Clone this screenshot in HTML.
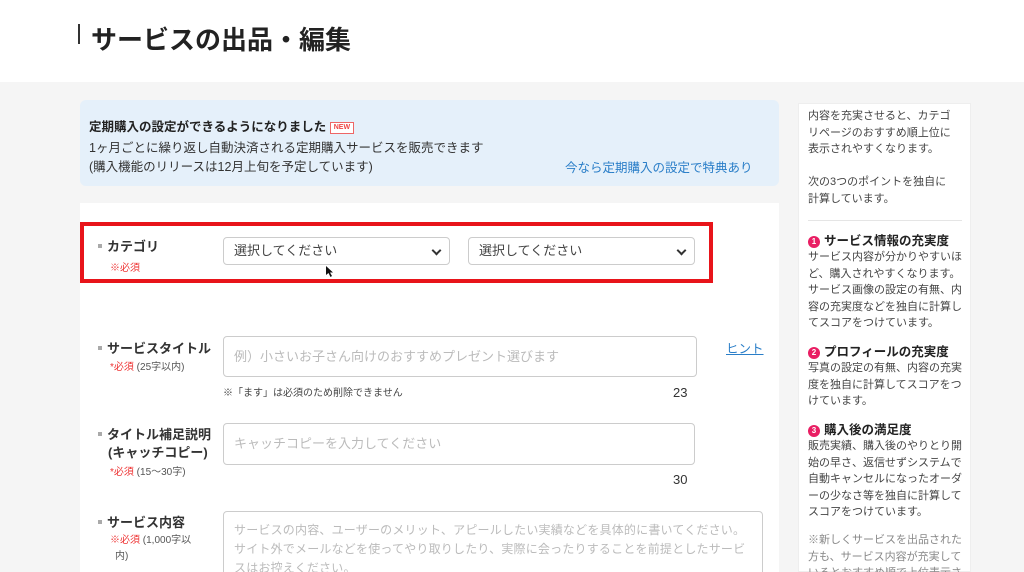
<!DOCTYPE html>
<html style="overflow:hidden;height:572px"><head><meta charset="utf-8">
<style>
*{margin:0;padding:0;box-sizing:border-box}
body{width:1024px;height:572px;overflow:hidden;background:#f5f5f5;font-family:"Liberation Sans","Noto Sans CJK JP",sans-serif;color:#333;position:relative}
.a{position:absolute;white-space:nowrap}
.hdr{position:absolute;left:0;top:0;width:1024px;height:82px;background:#fff}
.lbl{font-size:13px;font-weight:bold;color:#333}
.lbl i{display:inline-block;width:4px;height:4px;background:#aaa;margin-right:5px;vertical-align:middle;position:relative;top:-2px}
.req{font-size:10px;color:#e33}
.req span{color:#555}
.inp{position:absolute;background:#fff;border:1px solid #ccc;border-radius:4px;font-size:13px;color:#bbb;padding-left:10px;overflow:hidden}
.sel{position:absolute;background:#fff;border:1px solid #ccc;border-radius:4px;font-size:13px;color:#444;padding-left:10px;line-height:26px}
.sel:after{content:"";position:absolute;right:9px;top:9px;width:5px;height:5px;border-right:2px solid #333;border-bottom:2px solid #333;transform:rotate(45deg)}
.side{font-size:11px;line-height:16.5px;color:#444}
.sh{font-size:12.5px;font-weight:bold;color:#222}
.num{display:inline-block;width:12px;height:12px;border-radius:50%;background:#e91e63;color:#fff;font-size:8px;text-align:center;line-height:12px;margin-right:4px;vertical-align:1px}
</style></head><body>
<div class="hdr"></div>
<div class="a" style="left:78px;top:24px;width:2px;height:20px;background:#333"></div>
<div class="a" style="left:91px;top:20px;font-size:26px;font-weight:bold;color:#222">サービスの出品・編集</div>

<div class="a" style="left:80px;top:100px;width:699px;height:86px;background:#e5f0fa;border-radius:6px"></div>
<div class="a" style="left:89px;top:116px;font-size:12.5px;font-weight:bold;color:#222">定期購入の設定ができるようになりました <span style="display:inline-block;border:1px solid #e66;color:#e44;font-size:7px;padding:0 3px;line-height:10px;vertical-align:2px;background:#fff">NEW</span></div>
<div class="a" style="left:89px;top:137px;font-size:12.5px;color:#333">1ヶ月ごとに繰り返し自動決済される定期購入サービスを販売できます</div>
<div class="a" style="left:89px;top:156px;font-size:12.5px;color:#333">(購入機能のリリースは12月上旬を予定しています)</div>
<div class="a" style="left:565px;top:157px;font-size:12.5px;color:#2a7ec8">今なら定期購入の設定で特典あり</div>

<div class="a" style="left:80px;top:203px;width:699px;height:369px;background:#fff"></div>
<div class="a" style="left:80px;top:222px;width:633px;height:61px;border:4px solid #e8141a"></div>
<div class="a lbl" style="left:98px;top:236px"><i></i>カテゴリ</div>
<div class="a req" style="left:110px;top:259px">※必須</div>
<div class="sel" style="left:223px;top:237px;width:227px;height:28px">選択してください</div>
<div class="sel" style="left:468px;top:237px;width:227px;height:28px">選択してください</div>
<svg class="a" style="left:326px;top:266px" width="8" height="11" viewBox="0 0 8 11"><path d="M0 0L0 9L2.5 7L4.5 11L6 10L4 6.5L7 6.5Z" fill="#111"/></svg>

<div class="a lbl" style="left:98px;top:338px"><i></i>サービスタイトル</div>
<div class="a req" style="left:110px;top:358px">*必須 <span>(25字以内)</span></div>
<div class="inp" style="left:223px;top:336px;width:474px;height:41px;line-height:39px">例）小さいお子さん向けのおすすめプレゼント選びます</div>
<div class="a" style="left:726px;top:338px;font-size:12.5px;color:#2a7ec8;text-decoration:underline">ヒント</div>
<div class="a" style="left:223px;top:384px;font-size:10px;color:#444">※「ます」は必須のため削除できません</div>
<div class="a" style="left:673px;top:385px;font-size:13px;color:#333">23</div>

<div class="a lbl" style="left:98px;top:424px"><i></i>タイトル補足説明</div>
<div class="a lbl" style="left:108px;top:442px">(キャッチコピー)</div>
<div class="a req" style="left:110px;top:463px">*必須 <span>(15～30字)</span></div>
<div class="inp" style="left:223px;top:423px;width:472px;height:42px;line-height:40px">キャッチコピーを入力してください</div>
<div class="a" style="left:673px;top:472px;font-size:13px;color:#333">30</div>

<div class="a lbl" style="left:98px;top:512px"><i></i>サービス内容</div>
<div class="a req" style="left:110px;top:531px">※必須 <span>(1,000字以</span></div>
<div class="a" style="left:115px;top:547px;font-size:10px;color:#555">内)</div>
<div class="inp" style="left:223px;top:511px;width:540px;height:70px;padding:9px 6px 0 10px;line-height:19px;white-space:normal;font-size:12px;letter-spacing:0.2px">サービスの内容、ユーザーのメリット、アピールしたい実績などを具体的に書いてください。サイト外でメールなどを使ってやり取りしたり、実際に会ったりすることを前提としたサービスはお控えください。</div>

<div class="a" style="left:798px;top:103px;width:173px;height:469px;background:#fff;border:1px solid #eee"></div>
<div class="a side" style="left:808px;top:108px">内容を充実させると、カテゴ<br>リページのおすすめ順上位に<br>表示されやすくなります。<br><br>次の3つのポイントを独自に<br>計算しています。</div>
<div class="a" style="left:808px;top:220px;width:154px;height:1px;background:#e5e5e5"></div>
<div class="a sh" style="left:808px;top:230px"><span class="num">1</span>サービス情報の充実度</div>
<div class="a side" style="left:808px;top:249px">サービス内容が分かりやすいほ<br>ど、購入されやすくなります。<br>サービス画像の設定の有無、内<br>容の充実度などを独自に計算し<br>てスコアをつけています。</div>
<div class="a sh" style="left:808px;top:341px"><span class="num">2</span>プロフィールの充実度</div>
<div class="a side" style="left:808px;top:360px">写真の設定の有無、内容の充実<br>度を独自に計算してスコアをつ<br>けています。</div>
<div class="a sh" style="left:808px;top:419px"><span class="num">3</span>購入後の満足度</div>
<div class="a side" style="left:808px;top:438px">販売実績、購入後のやりとり開<br>始の早さ、返信せずシステムで<br>自動キャンセルになったオーダ<br>ーの少なさ等を独自に計算して<br>スコアをつけています。</div>
<div class="a side" style="left:808px;top:532px;color:#888">※新しくサービスを出品された<br>方も、サービス内容が充実して<br>いるとおすすめ順で上位表示さ</div>
</body></html>
